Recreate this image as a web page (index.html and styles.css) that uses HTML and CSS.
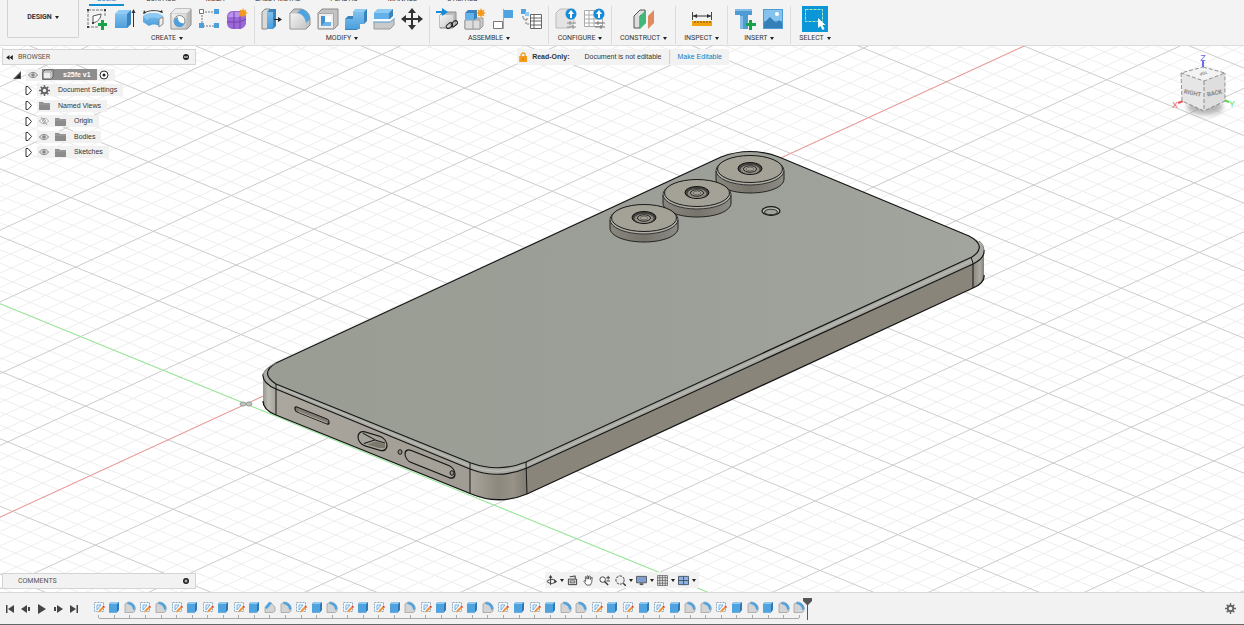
FILE: index.html
```html
<!DOCTYPE html>
<html lang="en">
<head>
<meta charset="utf-8">
<title>s25fe v1</title>
<link rel="stylesheet" href="styles.css">
</head>
<body>
<svg class="defs" aria-hidden="true">
  <defs>
    <linearGradient id="gBlue" x1="0" y1="0" x2="0" y2="1"><stop offset="0" stop-color="#7fc0ee"/><stop offset="1" stop-color="#4c9fdc"/></linearGradient>
    <linearGradient id="gGrey" x1="0" y1="0" x2="1" y2="1"><stop offset="0" stop-color="#f4f4f4"/><stop offset="1" stop-color="#c6c6c6"/></linearGradient>
  </defs>
  <symbol id="sketch" viewBox="0 0 22 22"><path d="M2 2h17v7M2 2v17h10" fill="none" stroke="#777" stroke-dasharray="3 1"/><path d="M7 15V8l8-2c0 4-3 8-8 9z" fill="#fff" stroke="#555"/><path d="M1 1h2v2H1zM18 1h2v2h-2zM1 18h2v2H1zM6 14h2v2H6z" fill="#444"/><path d="M15 12h3v3h3v3h-3v4h-3v-4h-3v-3h3z" fill="#16a34a"/></symbol>
  <symbol id="extrude" viewBox="0 0 22 22"><path d="M1 6l4-4h12v14l-4 4H1z" fill="#9cb3c4"/><path d="M1 6l4-4h12l-4 4z" fill="#8fccf5"/><path d="M1 6h12v14H1z" fill="url(#gBlue)"/><path d="M13 6l4-4v14l-4 4z" fill="#3b83bd"/><path d="M19.500 19V3" stroke="#333"/><path d="M17.500 5l2-4 2 4z" fill="#333"/></symbol>
  <symbol id="revolve" viewBox="0 0 22 22"><path d="M1 8c5-4 15-4 20 0l-4 10c-3-2-7-2-10 0L1 14z" fill="url(#gBlue)"/><path d="M1 8c5-4 15-4 20 0l-4 3c-3-2-9-2-12 1z" fill="#8ccaf3"/><path d="M17 11l4-2v7l-4 3z" fill="#eee" stroke="#888"/><path d="M2 5c5-3 13-3 18-1" fill="none" stroke="#444"/><path d="M1 6l1-4 2 3zM21 5l-4-1 3-2z" fill="#333"/></symbol>
  <symbol id="hole" viewBox="0 0 22 22"><path d="M1 5l4-4h16v16l-4 4H1z" fill="#bbb" stroke="#8b8b8b"/><path d="M1.500 5.500h15v15h-15z" fill="url(#gGrey)"/><path d="M1 5l4-4h16l-4 4z" fill="#ececec"/><circle cx="9.500" cy="13" r="5.500" fill="#fff" stroke="#888"/><path d="M8 9a5 5 0 0 0 6 6 5 5 0 1 1-6-6z" fill="#4c9fdc"/></symbol>
  <symbol id="pattern" viewBox="0 0 22 22"><path d="M4 4h14M4 4v14h14" fill="none" stroke="#777" stroke-dasharray="2 1"/><path d="M1.500 1.500h4v4h-4z" fill="#fff" stroke="#777"/><path d="M16 1h5v5h-5zM1 15h5v5H1zM16 15h5v5h-5z" fill="#4c9fdc"/></symbol>
  <symbol id="form" viewBox="0 0 22 22"><path d="M1 8q1-5 6-5h8q5 1 5 6v7q-2 5-7 5H6q-5-1-5-6z" fill="#9b69d6"/><path d="M2 8q2-4 5-4h8l-2 5H2z" fill="#b994e8"/><path d="M1 14h12l7-3M8 4v17M14 9v12" stroke="#7440b3" fill="none"/><use href="#spark" x="12" y="0" width="10" height="10"/></symbol>
  <symbol id="spark" viewBox="0 0 10 10"><path d="M5 0l1 2.500L8.500 1.500 7.500 4 10 5 7.500 6l1 2.500L6 7.500 5 10 4 7.500 1.500 8.500l1-2.500L0 5l2.500-1-1-2.500L4 2.500z" fill="#f39a16"/></symbol>
  <symbol id="press" viewBox="0 0 22 22"><path d="M1 4l3-3h5v17l-3 3H1z" fill="#d9d9d9" stroke="#888"/><path d="M6 4l3-3h6v17l-3 3H6z" fill="#3b83bd"/><path d="M6 4h6v17H6z" fill="url(#gBlue)"/><path d="M13 11.500h5" stroke="#222"/><path d="M17 9l4 2.500-4 2.500z" fill="#222"/></symbol>
  <symbol id="fillet" viewBox="0 0 22 22"><path d="M1 5l4-4h7c5 1 9 5 9 10v6l-4 4H1z" fill="#c3c3c3" stroke="#8b8b8b"/><path d="M1.500 5.500H8c5 0 9 4 9 9v6H1.500z" fill="url(#gGrey)"/><path d="M8 5l4-4c5 1 9 5 9 10l-4 4c-.500-5-4-9.500-9-10z" fill="#4fa4e0"/></symbol>
  <symbol id="shell" viewBox="0 0 22 22"><path d="M1 5l4-4h16v16l-4 4H1z" fill="#c3c3c3" stroke="#8b8b8b"/><path d="M1.500 5.500h15v15h-15z" fill="#eee" stroke="#aaa"/><path d="M4 8h10v10H4z" fill="#3f93d0"/><path d="M8 8h6v6H8z" fill="#fff"/><path d="M4 18l4-4h6v4z" fill="#6ab4e8"/></symbol>
  <symbol id="combine" viewBox="0 0 22 22"><path d="M8 4l3-3h11v12l-3 3h-4v3l-3 3H0V11l3-3h5z" fill="#3b83bd"/><path d="M8 4h11v12h-4v5H0V11h8z" fill="url(#gBlue)"/><path d="M8 4l3-3h11l-3 3z" fill="#8fccf5"/></symbol>
  <symbol id="split" viewBox="0 0 22 22"><path d="M1 14h16l4-3v6l-4 4H1z" fill="#c9c9c9" stroke="#999"/><path d="M1 5l4-4h15v7l-3 3H1z" fill="#3b83bd"/><path d="M1 5h15v6H1z" fill="#62b1ea"/><path d="M1 5l4-4h15l-4 4z" fill="#8fccf5"/><path d="M0 12.500h17l5-4" stroke="#fff" stroke-width="2" fill="none"/><path d="M0 14h17l5-4" stroke="#62b1ea" fill="none"/></symbol>
  <symbol id="move" viewBox="0 0 22 22"><path d="M11 3v16M3 11h16" stroke="#333" stroke-width="2"/><path d="M11 0l4 5H7zM11 22l4-5H7zM0 11l5-4v8zM22 11l-5-4v8z" fill="#333"/></symbol>
  <symbol id="insertComp" viewBox="0 0 22 22"><path d="M4 7l3-3h13v13l-3 3H4z" fill="#bdbdbd" stroke="#8b8b8b"/><path d="M4 7h13v12H4z" fill="url(#gGrey)"/><path d="M0 4h7" stroke="#168cd8" stroke-width="2"/><path d="M6 0l6 4-6 4z" fill="#168cd8"/><rect x="10" y="16" width="7" height="4" rx="2" fill="none" stroke="#222" transform="rotate(-40 13 18)"/><rect x="15" y="14" width="7" height="4" rx="2" fill="none" stroke="#222" transform="rotate(-40 18 16)"/></symbol>
  <symbol id="newComp" viewBox="0 0 22 22"><path d="M1 12l3-2h15v8l-3 3H1z" fill="#ccc" stroke="#999"/><path d="M1 12h15v9H1zM9 12v9" fill="#ddd" stroke="#999"/><path d="M1 5l3-3h9v8l-3 2H1z" fill="#3b83bd"/><path d="M1 5h9v7H1z" fill="#62b1ea"/><use href="#spark" x="12" y="0" width="10" height="10"/></symbol>
  <symbol id="joint" viewBox="0 0 22 22"><path d="M1.500 13.500h9v7h-9z" fill="#fff" stroke="#777"/><path d="M12 2h9v8h-9z" fill="#4fa4e0"/><path d="M11.500 1v20" stroke="#e88"/></symbol>
  <symbol id="bom" viewBox="0 0 22 22"><path d="M1 1h5v5H1z" fill="#4fa4e0"/><path d="M5 4h4v4H5z" fill="#8fccf5"/><path d="M3 8v3h6M6 11v5h4" fill="none" stroke="#777" stroke-dasharray="2 1"/><path d="M10.500 6.500h11v14h-11zM10 10h11M10 13h11M10 17h11M14 7v14" fill="#fff" stroke="#666"/></symbol>
  <symbol id="config" viewBox="0 0 22 22"><path d="M1 5l4-4h14v14l-4 5H1z" fill="#e3e3e3" stroke="#bbb"/><circle cx="16" cy="6" r="5.500" fill="#168cd8"/><path d="M16 2l3 4h-2v4h-2V6h-2z" fill="#fff"/><path d="M12 15h9M12 19h9M15 13v4M18 17v4" stroke="#888"/></symbol>
  <symbol id="table" viewBox="0 0 22 22"><path d="M1.500 2.500h18v16h-18zM1 7h18M1 11h18M1 15h18M6 3v16M11 3v16" fill="#fff" stroke="#aaa"/><circle cx="16" cy="6" r="5.500" fill="#168cd8"/><path d="M16 2l3 4h-2v4h-2V6h-2z" fill="#fff"/><path d="M12 15h10M12 19h10M15 13v4M18 17v4" stroke="#777"/></symbol>
  <symbol id="plane" viewBox="0 0 22 22"><path d="M1 8l6-6h5v3L7 8v12H1z" fill="#ddd" stroke="#555"/><path d="M7 8l6-6v13l-6 6z" fill="#3fb878"/><path d="M15 8l6-6v13l-6 6z" fill="#e08b5f"/></symbol>
  <symbol id="measure" viewBox="0 0 22 22"><path d="M2 8h18" stroke="#333"/><path d="M1.500 4v8M20.500 4v8" stroke="#444"/><path d="M2 8l4-2v4zM20 8l-4-2v4z" fill="#333"/><path d="M1 13h20v5H1z" fill="#f0a30a"/><path d="M4 13v2M7 13v2M10 13v2M13 13v2M16 13v2M19 13v2" stroke="#7a5200"/></symbol>
  <symbol id="bolt" viewBox="0 0 22 22"><path d="M1 1h17v6h-4v14H6V7H1z" fill="#4f9bd3"/><path d="M1 1h17v2H1zM6 8h3v13H6z" fill="#82bde6"/><path d="M15 12h3v3h4v3h-4v4h-3v-4h-3v-3h3z" fill="#16a34a"/></symbol>
  <symbol id="image" viewBox="0 0 22 22"><path d="M1 1h20v20H1z" fill="#4f9bd3"/><path d="M2 2h18v11H2z" fill="#85c2ee"/><path d="M2 15l6-6 6 6 3-3 3 3v5H2z" fill="#357fb8"/><circle cx="15" cy="6" r="2" fill="#fff"/></symbol>
  <symbol id="select" viewBox="0 0 26 26"><path d="M0 0h26v26H0z" fill="#0b96d8"/><path d="M3.500 3.500h17v12h-17z" fill="none" stroke="#a9e8c0" stroke-dasharray="3 1"/><path d="M16 12v10l2.500-2 2 4 2-1-2-4h3z" fill="#fff"/></symbol>
  <symbol id="eye" viewBox="0 0 10 8"><path d="M.500 4c2-3.500 7-3.500 9 0-2 3.500-7 3.500-9 0z" fill="#ddd" stroke="#8b8b8b"/><circle cx="5" cy="4" r="1.800" fill="#888"/></symbol>
  <symbol id="eyeOff" viewBox="0 0 10 8"><path d="M.500 4c2-3.500 7-3.500 9 0-2 3.500-7 3.500-9 0z" fill="#fff" stroke="#aaa"/><circle cx="5" cy="4" r="1.500" fill="none" stroke="#aaa"/><path d="M2 0l6 8" stroke="#aaa"/></symbol>
  <symbol id="folder" viewBox="0 0 11 9"><path d="M0 1h4l1 1h6v7H0z" fill="#8c8c8c"/><path d="M0 3h11" stroke="#bbb" stroke-width=".500"/></symbol>
  <symbol id="gear" viewBox="0 0 12 12"><circle cx="6" cy="6" r="3" fill="none" stroke="#666" stroke-width="2"/><path d="M6 0v2.500M6 9.500V12M0 6h2.500M9.500 6H12M1.800 1.800l1.800 1.800M8.400 8.400l1.800 1.800M10.200 1.800L8.400 3.600M3.600 8.400l-1.800 1.800" stroke="#666" stroke-width="1.500"/></symbol>
  <symbol id="caret" viewBox="0 0 7 9"><path d="M1 .500h2L6.500 4.500 3 8.500H1z" fill="#fff" stroke="#333"/></symbol>
  <symbol id="caretOpen" viewBox="0 0 9 8"><path d="M8 0v8H0z" fill="#555"/><path d="M7 3v4H3z" fill="#222"/></symbol>
  <symbol id="tSketch" viewBox="0 0 12 12"><path d="M1.500 1.500h9v9h-9z" fill="#f5faff" stroke="#8fa9bd" stroke-dasharray="2 1"/><path d="M4 9V4h4L4 9" fill="none" stroke="#5aa0d6" stroke-width=".800"/><path d="M5 11.500l1-2.500 3.500-3.500 1.500 1.500L7.500 10.500z" fill="#f0933c"/><path d="M9.500 5.500l1-1 1.500 1.500-1 1z" fill="#d33"/></symbol>
  <symbol id="tExtrude" viewBox="0 0 12 12"><path d="M1 3l2-2h8v8l-2 2.500H1z" fill="#3179b5"/><path d="M1 3h8v8.500H1z" fill="#4fa4e0"/><path d="M1 3l2-2h8L9 3z" fill="#8fc9f0"/></symbol>
  <symbol id="tFillet" viewBox="0 0 12 12"><path d="M1 3l3-2c4 0 7 3 7 6v3l-2 1.500H1z" fill="#d4d4d4" stroke="#999" stroke-width=".700"/><path d="M4 1c4 0 7.500 3 7.500 7L9 9C9 6 7 3.500 3 3z" fill="#4fa4e0"/></symbol>
  <symbol id="tChamfer" viewBox="0 0 12 12"><path d="M1 7l5-6 5 5v4l-2 1.500H1z" fill="#d4d4d4" stroke="#999" stroke-width=".700"/><path d="M.500 6.500L5 1l3 1-5 6z" fill="#4fa4e0"/></symbol>
</svg>

<div class="app">
  <header class="toolbar">
    <button class="workspace-switch" type="button">DESIGN <i class="arrow"></i></button>
    <div class="ribbon">
      <nav class="tabs" aria-label="Workspace tabs">
        <a class="tab active" href="#solid">SOLID</a><a class="tab" href="#surface">SURFACE</a><a class="tab" href="#mesh">MESH</a><a class="tab" href="#sheet">SHEET METAL</a><a class="tab" href="#plastic">PLASTIC</a><a class="tab" href="#manage">MANAGE</a><a class="tab" href="#utilities">UTILITIES</a>
      </nav>
      <div class="groups">
        <section class="group"><div class="tools">
          <button aria-label="Create sketch"><svg><use href="#sketch"/></svg></button><button aria-label="Extrude"><svg><use href="#extrude"/></svg></button><button aria-label="Revolve"><svg><use href="#revolve"/></svg></button><button aria-label="Hole"><svg><use href="#hole"/></svg></button><button aria-label="Pattern"><svg><use href="#pattern"/></svg></button><button aria-label="Create form"><svg><use href="#form"/></svg></button>
        </div><button class="menu">CREATE <i class="arrow"></i></button></section>
        <section class="group"><div class="tools">
          <button aria-label="Press pull"><svg><use href="#press"/></svg></button><button aria-label="Fillet"><svg><use href="#fillet"/></svg></button><button aria-label="Shell"><svg><use href="#shell"/></svg></button><button aria-label="Combine"><svg><use href="#combine"/></svg></button><button aria-label="Split body"><svg><use href="#split"/></svg></button><button aria-label="Move"><svg><use href="#move"/></svg></button>
        </div><button class="menu">MODIFY <i class="arrow"></i></button></section>
        <section class="group"><div class="tools">
          <button aria-label="Insert component"><svg><use href="#insertComp"/></svg></button><button aria-label="New component"><svg><use href="#newComp"/></svg></button><button aria-label="Joint"><svg><use href="#joint"/></svg></button><button aria-label="Bill of materials"><svg><use href="#bom"/></svg></button>
        </div><button class="menu">ASSEMBLE <i class="arrow"></i></button></section>
        <section class="group"><div class="tools">
          <button aria-label="Configure design"><svg><use href="#config"/></svg></button><button aria-label="Configuration table"><svg><use href="#table"/></svg></button>
        </div><button class="menu">CONFIGURE <i class="arrow"></i></button></section>
        <section class="group wide"><div class="tools"><button aria-label="Offset plane"><svg><use href="#plane"/></svg></button></div><button class="menu">CONSTRUCT <i class="arrow"></i></button></section>
        <section class="group wide"><div class="tools"><button aria-label="Measure"><svg><use href="#measure"/></svg></button></div><button class="menu">INSPECT <i class="arrow"></i></button></section>
        <section class="group"><div class="tools">
          <button aria-label="Insert fastener"><svg><use href="#bolt"/></svg></button><button aria-label="Insert image"><svg><use href="#image"/></svg></button>
        </div><button class="menu">INSERT <i class="arrow"></i></button></section>
        <section class="group wide"><div class="tools"><button class="big" aria-label="Select"><svg><use href="#select"/></svg></button></div><button class="menu">SELECT <i class="arrow"></i></button></section>
      </div>
    </div>
  </header>

  <main class="viewport">
    <svg class="scene" viewBox="0 46 1244 546" preserveAspectRatio="xMidYMid slice" role="img" aria-label="Phone model on grid">
      <defs>
        <linearGradient id="face" x1="0" y1="0" x2="1" y2="0"><stop offset="0" stop-color="#9a9d94"/><stop offset=".55" stop-color="#9c9f97"/><stop offset="1" stop-color="#a1a59d"/></linearGradient>
        <linearGradient id="sideL" x1="0" y1="0" x2="1" y2="0"><stop offset="0" stop-color="#aba79f"/><stop offset="1" stop-color="#a09c94"/></linearGradient>
        <linearGradient id="cornerL" x1="0" y1="0" x2="1" y2="0"><stop offset="0" stop-color="#96968f"/><stop offset=".4" stop-color="#bcbcb5"/><stop offset="1" stop-color="#a5a299"/></linearGradient>
        <linearGradient id="cornerB" x1="0" y1="0" x2="1" y2="0"><stop offset="0" stop-color="#aaa69d"/><stop offset=".5" stop-color="#8d887e"/><stop offset=".75" stop-color="#989287"/><stop offset="1" stop-color="#817c72"/></linearGradient>
        <linearGradient id="cornerR" x1="0" y1="0" x2="1" y2="0"><stop offset="0" stop-color="#8d887e"/><stop offset=".65" stop-color="#aaa9a1"/><stop offset="1" stop-color="#80807a"/></linearGradient>
        <linearGradient id="camSide" x1="0" y1="0" x2="1" y2="0"><stop offset="0" stop-color="#8a877f"/><stop offset=".5" stop-color="#77746c"/><stop offset="1" stop-color="#8c8b84"/></linearGradient>
        <g id="camera">
          <path d="M-34 3v8c0 8 15 14 34 14s34-6 34-14v-8z" fill="url(#camSide)" stroke="#222"/>
          <ellipse cy="2.500" rx="34" ry="14.500" fill="#aeada5" stroke="#333"/>
          <ellipse cy="1" rx="32.500" ry="13.500" fill="#a4a196" stroke="#1c1c1c"/>
          <ellipse cy=".500" rx="12" ry="6" fill="#45433f" stroke="#111"/>
          <ellipse cy="1.500" rx="9.500" ry="4.500" fill="#8f8c83"/>
          <ellipse cy="1" rx="6.500" ry="3.200" fill="#a4a196" stroke="#222"/>
          <ellipse cy="1" rx="4" ry="1.800" fill="#a4a196" stroke="#55534e" stroke-width=".700"/>
        </g>
      </defs>
      <path id="minor" class="grid-minor"/>
      <path id="major" class="grid-major"/>
      <path class="axis-x" d="M-154 588L1446 -148"/>
      <path class="axis-y" d="M-581 67L1073 741"/>
      <g fill="#b9c9b9" stroke="#999"><ellipse cx="243" cy="404" rx="3" ry="2"/><ellipse cx="249" cy="404" rx="3" ry="2"/></g>

      <path d="M276 363Q263 369 263 377V402Q264 410 276 415L469 493Q498 506 527 494L973 288Q984 283 984 275V251Q984 242 969 236L779 157Q750 146 721 157z" fill="#a9aaa3"/>
      <path d="M263 377Q263 383 276 389V415Q264 410 263 402z" fill="url(#cornerL)"/>
      <path d="M276 389L470 469V494L276 415z" fill="url(#sideL)"/>
      <path d="M470 469Q498 480 527 468V494Q498 506 470 494z" fill="url(#cornerB)"/>
      <path d="M527 468L973 264V288L527 494z" fill="#8a857a"/>
      <path d="M973 264Q984 259 984 251V275Q984 283 973 288z" fill="url(#cornerR)"/>
      <g fill="none" stroke="#161616">
        <path d="M276 386L470 466Q498 477 527 465L973 260" stroke="#bfbfb9"/>
        <path d="M263 374Q262 383 276 389L470 469Q498 480 527 468L973 264Q985 258 984 250" stroke-width="1.200"/>
        <path d="M263 401Q263 410 276 415L469 493Q498 506 527 494L973 288Q985 283 984 275" stroke-width="1.300"/>
        <path d="M276 384V415M470 463V494M526 462L527 494M971 257L973 263V288"/>
      </g>
      <path d="M276 363Q259 373 276 384L471 463Q499 473 526 462L972 257Q988 246 969 236L779 157Q750 146 721 157z" fill="url(#face)" stroke="#161616" stroke-width="1.200"/>
      <path d="M263 376Q263 369 276 363M979 241Q984 244 984 252" fill="none" stroke="#777"/>
      <g stroke="#161616" stroke-width="1.200">
        <g transform="matrix(1 .4 0 1 312 416)"><rect x="-17" y="-3" width="34" height="5" rx="2" fill="#807c73"/><path d="M-14 1H15" stroke="#aaa69d" stroke-width="1"/></g>
        <g transform="matrix(1 .3 0 1 372 441)"><rect x="-14" y="-7" width="29" height="14" rx="7" fill="#a5a299"/><path d="M4 -1H13V3L7 5H-5z" fill="#7b776d" stroke="none"/><path d="M-9 -5L3 -2 -8 5M3 -2L13 -2" fill="none" stroke-width="1"/></g>
        <g transform="matrix(1 .4 0 1 430 464)"><rect x="-25" y="-6" width="50" height="12" rx="6" fill="#a5a199"/></g>
        <ellipse cx="400" cy="452" rx="2" ry="2.300" fill="#918d84" stroke-width="1"/>
        <ellipse cx="452" cy="473" rx="2" ry="2.300" fill="#918d84" stroke-width="1"/>
        <ellipse cx="771" cy="211" rx="9" ry="4.300" fill="#b3b4ac"/>
        <ellipse cx="771" cy="212" rx="6.500" ry="2.700" fill="#9fa299" stroke-width=".800"/>
      </g>
      <use href="#camera" x="750" y="168"/>
      <use href="#camera" x="697" y="192"/>
      <use href="#camera" x="644" y="217"/>
    </svg>

    <aside class="browser">
      <div class="panel-bar"><svg class="collapse" viewBox="0 0 8 6"><path d="M4 0v6L0 3zM8 0v6L4 3z" fill="#222"/></svg><span class="panel-title">BROWSER</span><button aria-label="Minimise browser"><svg viewBox="0 0 6 6"><circle cx="3" cy="3" r="3" fill="#222"/><path d="M1 3h4" stroke="#fff"/></svg></button></div>
      <ul class="tree">
        <li class="root"><svg class="caret open"><use href="#caretOpen"/></svg><span class="item"><svg class="eye"><use href="#eye"/></svg><span class="chosen"><svg class="doc" viewBox="0 0 12 11"><path d="M1 3l2-2h8v7l-2 2H1z" fill="#eee" stroke="#555"/><path d="M1 3h8v7M9 3l2-2" fill="none" stroke="#999"/></svg>s25fe v1</span><svg class="radio" viewBox="0 0 10 10"><circle cx="5" cy="5" r="4" fill="#fff" stroke="#333"/><circle cx="5" cy="5" r="1.500" fill="#222"/></svg></span></li>
        <li><svg class="caret"><use href="#caret"/></svg><span class="item"><svg class="folder cog"><use href="#gear"/></svg><span>Document Settings</span></span></li>
        <li><svg class="caret"><use href="#caret"/></svg><span class="item"><svg class="folder"><use href="#folder"/></svg><span>Named Views</span></span></li>
        <li><svg class="caret"><use href="#caret"/></svg><span class="item"><svg class="eye"><use href="#eyeOff"/></svg><svg class="folder"><use href="#folder"/></svg><span>Origin</span></span></li>
        <li><svg class="caret"><use href="#caret"/></svg><span class="item"><svg class="eye"><use href="#eye"/></svg><svg class="folder"><use href="#folder"/></svg><span>Bodies</span></span></li>
        <li><svg class="caret"><use href="#caret"/></svg><span class="item"><svg class="eye"><use href="#eye"/></svg><svg class="folder"><use href="#folder"/></svg><span>Sketches</span></span></li>
      </ul>
    </aside>

    <div class="notice"><svg viewBox="0 0 8 10"><path d="M2 5V3a2 2 0 0 1 4 0v2" fill="none" stroke="#f39a16" stroke-width="1.300"/><path d="M0 4h8v6H0z" fill="#f39a16"/><path d="M4 6v2" stroke="#c87c00"/></svg><b>Read-Only:</b><span>Document is not editable</span><a href="#edit">Make Editable</a></div>

    <svg class="cube" viewBox="1169 48 70 74" role="img" aria-label="View cube">
      <defs><filter id="soft" x="-30%" y="-60%" width="160%" height="220%"><feGaussianBlur stdDeviation="2.500"/></filter></defs>
      <ellipse cx="1205" cy="107" rx="18" ry="8" fill="#999" opacity=".7" filter="url(#soft)"/>
      <path d="M1203 67V61" stroke="#6a6af0" stroke-width="2"/><path d="M1183 101L1178 103" stroke="#e55" stroke-width="2"/><path d="M1224 100L1229 102" stroke="#5d5" stroke-width="2"/>
      <path d="M1203 67L1225 73 1204 81 1181 73z" fill="#f3f3f3"/>
      <path d="M1181 73L1204 81V111L1182 101z" fill="#e6e6e6"/><path d="M1225 73L1204 81V111L1225 101z" fill="#dedede"/>
      <path d="M1203 67L1225 73 1204 81 1181 73zM1181 73L1182 101 1204 111 1225 101V73M1204 81V111" fill="none" stroke="#777" stroke-width=".800" stroke-dasharray="4 2"/>
      <g class="cube-face"><text transform="translate(1192 95) rotate(12)">RIGHT</text><text transform="translate(1215 95) rotate(-12)">BACK</text><text class="top" transform="translate(1203 72) rotate(165)">TOP</text></g>
      <g class="cube-axis"><text x="1203" y="61" fill="#6a6af0">Z</text><text x="1175" y="108" fill="#e66">X</text><text x="1232" y="107" fill="#6d6">Y</text></g>
    </svg>

    <div class="panel-bar comments"><span class="panel-title">COMMENTS</span><button aria-label="Add comment"><svg viewBox="0 0 6 6"><circle cx="3" cy="3" r="3" fill="#222"/><path d="M1.500 3h3M3 1.500v3" stroke="#fff" stroke-width=".800"/></svg></button></div>

    <div class="navbar">
      <button aria-label="Orbit"><svg viewBox="0 0 12 12"><path d="M5 1v10M1 7c3 3 7 3 10 0-2-3-7-3-10 0z" fill="none" stroke="#333"/><path d="M5 0l2 3H3zM12 7l-3-2v4z" fill="#333"/></svg></button><i class="arrow"></i>
      <button aria-label="Look at"><svg viewBox="0 0 12 12"><path d="M1.500 4.500h9v6h-9zM3 2l6-1v3" fill="#ddd" stroke="#333"/><path d="M3.500 6.500h5v2h-5z" fill="#fff" stroke="#555"/></svg></button>
      <button aria-label="Pan"><svg viewBox="0 0 12 12"><path d="M4 11L1 7c0-1 1-1 2 0L2.500 2.500c0-1 1-1 1.500 0l.500 2V1.500c0-1 1-1 1.500 0v3l.500-3c.500-1 1.500-.500 1.500.500L8 5l1-2c.500-1 1.500-.500 1 .500L9.500 8 8 11z" fill="#fff" stroke="#444" stroke-width=".900"/></svg></button>
      <button aria-label="Zoom"><svg viewBox="0 0 12 12"><circle cx="4" cy="5" r="3" fill="#fff" stroke="#333"/><path d="M6 7l4 4" stroke="#333" stroke-width="1.500"/><path d="M8 3h4M10 1v4M8 6.500h4" stroke="#333"/></svg></button>
      <button aria-label="Fit"><svg viewBox="0 0 12 12"><circle cx="5.500" cy="5.500" r="4.500" fill="#eee" stroke="#333" stroke-dasharray="3 1"/><path d="M9 9l3 3" stroke="#333" stroke-width="1.500"/></svg></button><i class="arrow"></i>
      <button aria-label="Display"><svg viewBox="0 0 12 12"><path d="M.500 1.500h11v7H.500z" fill="#7f9fd0" stroke="#555"/><path d="M4 9h4v2H4z" fill="#555"/></svg></button><i class="arrow"></i>
      <button aria-label="Grid"><svg viewBox="0 0 12 12"><path d="M.500.500h11v11H.500zM3 0v12M6 0v12M9 0v12M0 3h12M0 6h12M0 9h12" fill="#ddd" stroke="#666" stroke-width=".800"/></svg></button><i class="arrow"></i>
      <button aria-label="Viewports"><svg viewBox="0 0 12 12"><path d="M.500 1.500h11v9H.500zM6 1v10M0 6h12" fill="#8fb0e0" stroke="#456"/></svg></button><i class="arrow"></i>
    </div>
  </main>

  <footer class="timeline">
    <div class="playback">
      <button aria-label="Go to start"><svg viewBox="0 0 10 10"><path d="M1 1h1.500v8H1zM9 1v8L3 5z"/></svg></button>
      <button aria-label="Step back"><svg viewBox="0 0 10 10"><path d="M6 1v8L0 5zM7 3h2v4H7z"/></svg></button>
      <button aria-label="Play"><svg viewBox="0 0 10 10"><path d="M1 0l8 5-8 5z"/></svg></button>
      <button aria-label="Step forward"><svg viewBox="0 0 10 10"><path d="M4 1v8l6-4zM1 3h2v4H1z"/></svg></button>
      <button aria-label="Go to end"><svg viewBox="0 0 10 10"><path d="M7.500 1H9v8H7.500zM1 1v8l6-4z"/></svg></button>
    </div>
    <div class="features" id="features"></div>
    <svg class="playhead" viewBox="0 0 9 22"><path d="M0 0h9v3L5 7v15H4V7L0 3z" fill="#555"/></svg>
    <button class="settings" aria-label="Timeline settings"><svg><use href="#gear"/></svg></button>
  </footer>
</div>
<script src="main.js"></script>
</body>
</html>
```
FILE: styles.css
```css
* { box-sizing: border-box; }
body { margin: 0; font: 7px/8px "Liberation Sans", Arial, sans-serif; color: #333; background: #fff; }
button { margin: 0; padding: 0; border: 0; background: none; color: inherit; font: inherit; display: flex; align-items: center; justify-content: center; }
a { text-decoration: none; color: inherit; }
svg { display: block; flex: none; }
.defs { position: absolute; width: 0; height: 0; }
.app { display: flex; flex-direction: column; height: 100vh; overflow: hidden; border-bottom: 1px solid #666; }
.arrow { display: inline-block; flex: none; border: 2px solid transparent; border-top: 3px solid #222; border-bottom: 0; margin-left: 3px; }

.toolbar { display: flex; flex: none; background: #f3f3f3; border-bottom: 1px solid #dcdcdc; height: 46px; font-family: Roboto, "Liberation Sans", sans-serif; }
.workspace-switch { width: 72px; height: 38px; margin: 0 1px 0 7px; padding-bottom: 3px; border: 1px solid #d2d2d2; border-top: 0; border-radius: 0 0 2px 2px; font-weight: 700; }
.ribbon { display: flex; flex-direction: column; }
.tabs { display: flex; gap: 14px; height: 6px; padding-left: 9px; overflow: hidden; align-items: flex-end; }
.tab { padding: 0 8px 1px; border-bottom: 2px solid transparent; white-space: nowrap; }
.tab.active { color: #0b84c6; border-color: #1390d2; }
.groups { display: flex; }
.group { display: flex; flex-direction: column; align-items: center; padding: 0 6px; height: 38px; border-right: 1px solid #dcdcdc; }
.group:last-child { border-right: 0; }
.group.wide { padding: 0 8px; }
.tools { display: flex; gap: 6px; height: 26px; align-items: center; }
.tools svg { width: 22px; height: 22px; }
.tools .big svg { width: 26px; height: 26px; }
.menu { height: 10px; margin-top: 1px; white-space: nowrap; }

.viewport { position: relative; flex: 1; min-height: 0; overflow: hidden; }
.scene { position: absolute; inset: 0; width: 100%; height: 100%; }
.grid-minor, .grid-major, .axis-x, .axis-y { fill: none; stroke-width: 1; }
.grid-minor { stroke: #eeeeee; }
.grid-major { stroke: #cccccc; }
.axis-x { stroke: #f59a9a; }
.axis-y { stroke: #98f098; }

.panel-bar { display: flex; align-items: center; width: 194px; height: 16px; padding: 0 6px 0 3px; background: #f2f2f2; border: 1px solid #d4d4d4; color: #555; font-family: Roboto, "Liberation Sans", sans-serif; }
.panel-bar .collapse { width: 7px; height: 5px; margin-right: -7px; }
.panel-bar svg { width: 6px; height: 6px; }
.panel-title { flex: 1; margin-left: 12px; }
.browser { position: absolute; left: 2px; top: 3px; }
.tree { list-style: none; margin: 2px 0 0; padding: 0; display: grid; grid-template-rows: repeat(6, 1fr); height: 93px; }
.tree li { display: flex; align-items: center; padding-left: 22px; }
.tree li.root { padding-left: 10px; }
.item { display: flex; align-items: center; height: 12px; background: #f1f1f1; padding: 0 6px 0 2px; gap: 6px; white-space: nowrap; }
.caret { width: 7px; height: 9px; margin: 0 5px 0 1px; }
.caret.open { width: 9px; height: 8px; margin-right: 4px; }
.eye { width: 10px; height: 8px; }
.folder { width: 11px; height: 9px; margin-right: 2px; }
.folder.cog { height: 11px; }
.root .item { gap: 4px; padding-right: 6px; }
.chosen { display: flex; align-items: center; gap: 9px; height: 11px; padding-right: 6px; background: #8d8d8d; color: #fff; font-weight: 700; }
.doc { width: 12px; height: 11px; }
.radio { width: 10px; height: 10px; margin-left: -2px; }

.notice { position: absolute; top: 3px; left: 50%; transform: translateX(-50%); margin-left: 1px; display: flex; align-items: center; height: 16px; background: #f2f2f2; white-space: nowrap; }
.notice svg { width: 8px; height: 10px; margin: 0 5px 0 2px; }
.notice b { margin-right: 15px; }
.notice span { padding-right: 8px; border-right: 1px solid #ccc; line-height: 14px; }
.notice a { padding: 0 7px; color: #1a78b8; }

.cube { position: absolute; top: 2px; right: 5px; width: 70px; height: 74px; }
.cube-face text { font: 700 6px Roboto, sans-serif; fill: #888; text-anchor: middle; }
.cube-face .top { font-size: 4px; }
.cube-axis text { font: 9px "Liberation Sans", sans-serif; text-anchor: middle; }

.comments { position: absolute; left: 2px; bottom: 3px; }
.navbar { position: absolute; left: 50%; bottom: 4px; transform: translateX(-50%); display: flex; align-items: center; height: 16px; padding: 0 3px 0 1px; gap: 5px; background: #f2f2f2; }
.navbar svg { width: 11px; height: 11px; }
.navbar .arrow { margin: 0 -2px; }
.navbar .arrow:last-child { margin-right: 0; }

.timeline { display: flex; flex: none; align-items: center; height: 32px; background: #f2f2f2; border-top: 1px solid #d8d8d8; padding: 0 8px 0 2px; }
.playback { display: flex; margin-right: 9px; }
.playback button { width: 16px; height: 16px; }
.playback svg { width: 10px; height: 10px; fill: #444; }
.features { display: grid; grid-auto-flow: column; grid-auto-columns: 1fr; width: 716px; height: 22px; }
.features button { flex-direction: column; justify-content: flex-start; background: linear-gradient(#aaa, #aaa) 0 20px / 100% 1px no-repeat; }
.features button::after { content: ""; width: 1px; height: 3px; margin-top: 2px; background: #aaa; }
.features svg { width: 12px; height: 12px; margin-top: 3px; }
.features button:first-child { background-position: 8px 20px; }
.features button:last-child { background-size: 8px 1px; }
.playhead { width: 9px; height: 22px; margin-left: -4px; }
.settings { margin-left: auto; }
.settings svg { width: 11px; height: 11px; }
```
FILE: main.js
```js
// Isometric ground grid: one major cell spans the vectors A and B from the origin.
const O = [246, 404], A = [77.8, -35.8], B = [82.7, 33.7], R = 16;
const pt = (u, v) => `${(O[0] + A[0] * u + B[0] * v).toFixed(1)} ${(O[1] + A[1] * u + B[1] * v).toFixed(1)}`;
let minor = "", major = "";
for (let i = -R * 5; i <= R * 5; i++) {
  const k = i / 5;
  const d = `M${pt(k, -R)}L${pt(k, R)}M${pt(-R, k)}L${pt(R, k)}`;
  if (i % 5) minor += d; else major += d;
}
document.getElementById("minor").setAttribute("d", minor);
document.getElementById("major").setAttribute("d", major);

// Timeline features: S sketch, E extrude, F fillet, C chamfer.
const kinds = { S: "Sketch", E: "Extrude", F: "Fillet", C: "Chamfer" };
document.getElementById("features").innerHTML = [..."SEFSFSESESECFSEFSESEFSESEFSESEFFSESESEFFSEFEFF"]
  .map(k => `<button aria-label="${kinds[k]}"><svg><use href="#t${kinds[k]}"/></svg></button>`).join("");
```
